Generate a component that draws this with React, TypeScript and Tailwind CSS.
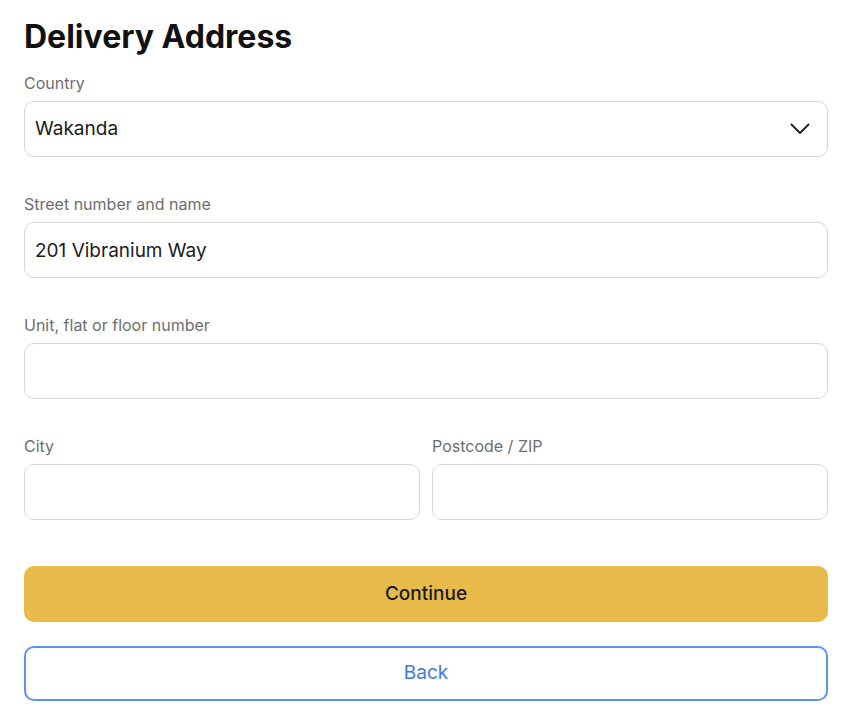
import { ChangeEvent, useState } from 'react'

const font = { fontFamily: 'Inter, "Noto Sans", sans-serif' }

function Field({ label, value, onChange }: { label: string; value: string; onChange: (v: string) => void }) {
  return (
    <label className="flex flex-col">
      <span className="pt-px text-base leading-5 text-[#6e6e6e]">{label}</span>
      <input
        value={value}
        onChange={(e: ChangeEvent<HTMLInputElement>) => onChange(e.target.value)}
        className="mt-2 h-14 w-full rounded-[10px] border border-[#d6d6d6] bg-white px-[10px] text-[19px] text-[#1c1c1c] outline-none"
      />
    </label>
  )
}

export default function App() {
  const [street, setStreet] = useState('201 Vibranium Way')
  const [unit, setUnit] = useState('')
  const [city, setCity] = useState('')
  const [zip, setZip] = useState('')

  return (
    <div className="min-h-[723px] bg-white px-6 pt-[17px]" style={font}>
      <div className="w-[804px]">
        <h1 className="text-[32px] font-bold leading-10 text-[#111]">Delivery Address</h1>
        <div className="mt-[15px] flex flex-col gap-9">
          <div className="flex flex-col">
            <span className="pt-px text-base leading-5 text-[#6e6e6e]">Country</span>
            <div className="mt-2 flex h-14 items-center justify-between rounded-[10px] border border-[#d6d6d6] bg-white pl-[10px] pr-[17px]">
              <span className="text-[19px] text-[#1c1c1c]">Wakanda</span>
              <svg width="20" height="12" viewBox="0 0 20 12" fill="none" aria-hidden="true">
                <polyline points="1.5,1.5 10,10 18.5,1.5" stroke="#222" strokeWidth="2" strokeLinecap="round" strokeLinejoin="round" />
              </svg>
            </div>
          </div>
          <Field label="Street number and name" value={street} onChange={setStreet} />
          <Field label="Unit, flat or floor number" value={unit} onChange={setUnit} />
          <div className="grid grid-cols-2 gap-3">
            <Field label="City" value={city} onChange={setCity} />
            <Field label="Postcode / ZIP" value={zip} onChange={setZip} />
          </div>
        </div>
        <button
          type="button"
          className="mt-[46px] flex h-14 w-full items-center justify-center rounded-[10px] bg-[#e8bb4a] text-[19px] font-medium text-[#1a1a1a]"
        >
          Continue
        </button>
        <button
          type="button"
          className="mt-6 flex h-[55px] w-full items-center justify-center rounded-[10px] border-2 border-[#5f93f0] bg-white text-[19px] text-[#3d78e8]"
        >
          Back
        </button>
      </div>
    </div>
  )
}
